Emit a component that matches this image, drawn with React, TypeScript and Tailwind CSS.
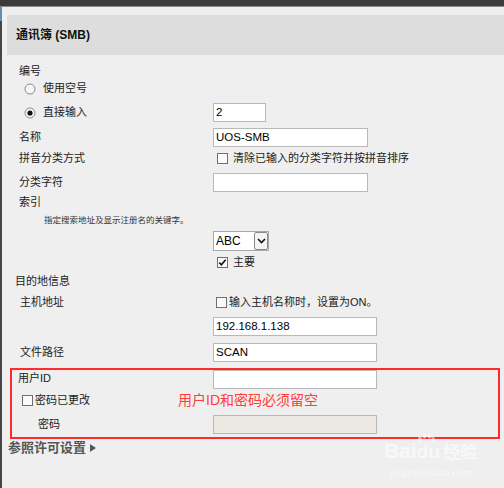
import type { ReactNode } from 'react';

const FONT = { fontFamily: '"Liberation Sans", "Noto Sans CJK SC", sans-serif' };

function Input({ value, width, disabled }: { value?: string; width: string; disabled?: boolean }) {
  return (
    <div
      className={`${width} h-[19px] border border-[#b8b8b8] flex items-center pl-[2px] text-[11.5px] text-black leading-none ${
        disabled ? 'bg-[#ebe9e2]' : 'bg-white'
      }`}
    >
      {value}
    </div>
  );
}

function Radio({ checked }: { checked?: boolean }) {
  return (
    <svg width="12" height="12" viewBox="0 0 12 12" className="shrink-0">
      <circle cx="6" cy="6" r="5" fill="#f7f7f7" stroke="#8a8a8a" strokeWidth="1" />
      {checked && <circle cx="6" cy="6" r="2.6" fill="#111" />}
    </svg>
  );
}

function Checkbox({ checked }: { checked?: boolean }) {
  return (
    <svg width="11" height="11" viewBox="0 0 11 11" className="shrink-0">
      <rect x="0.5" y="0.5" width="10" height="10" fill="#fafafa" stroke="#6f6f6f" />
      {checked && <path d="M2.3 5.6 L4.4 7.8 L8.6 2.8" fill="none" stroke="#111" strokeWidth="1.6" />}
    </svg>
  );
}

function Row({ className, label, children }: { className: string; label?: ReactNode; children?: ReactNode }) {
  return (
    <div className={`grid grid-cols-[211px_1fr] items-center ${className}`}>
      <div className="flex items-center">{label}</div>
      <div className="flex items-center">{children}</div>
    </div>
  );
}

export default function App() {
  return (
    <div className="w-[504px] h-[488px] bg-[#efefef] relative overflow-hidden text-[11px] text-[#222]" style={FONT}>
      <div className="h-[6px] bg-[#3b3b3b]" />
      <div className="h-px bg-[#8a8a8a]" />
      <div className="flex h-[481px]">
        <div className="w-[2px] bg-[#454545] flex flex-col">
          <div className="h-[14px] bg-[#5a8fb8]" />
        </div>
        <div className="flex-1">
          <div className="mt-[8px] ml-[5px] h-[40px] bg-[#dddddd] flex items-center pl-[9px]">
            <span className="text-[12px] font-bold text-[#111]">通讯簿 (SMB)</span>
          </div>

          <Row className="mt-[7px] h-[18px]" label={<span className="pl-[17px]">编号</span>} />
          <Row
            className="h-[17px]"
            label={
              <span className="pl-[22px] flex items-center gap-[7px]">
                <Radio />
                使用空号
              </span>
            }
          />
          <Row
            className="mt-[6px] h-[19px]"
            label={
              <span className="pl-[22px] flex items-center gap-[7px]">
                <Radio checked />
                直接输入
              </span>
            }
          >
            <Input value="2" width="w-[53px]" />
          </Row>
          <Row className="mt-[6px] h-[19px]" label={<span className="pl-[17px]">名称</span>}>
            <Input value="UOS-SMB" width="w-[155px]" />
          </Row>
          <Row className="mt-[2px] h-[18px]" label={<span className="pl-[17px]">拼音分类方式</span>}>
            <span className="pl-[4px] flex items-center gap-[5px]">
              <Checkbox />
              清除已输入的分类字符并按拼音排序
            </span>
          </Row>
          <Row className="mt-[6px] h-[19px]" label={<span className="pl-[17px]">分类字符</span>}>
            <Input width="w-[155px]" />
          </Row>
          <Row className="mt-px h-[18px]" label={<span className="pl-[17px]">索引</span>} />
          <div className="mt-[2px] h-[14px] flex items-center pl-[42px] text-[8.5px] text-[#333]">
            指定搜索地址及显示注册名的关键字。
          </div>
          <Row className="mt-[4px] h-[20px]">
            <div className="w-[56px] h-[20px] border border-[#a8a8a8] bg-white flex items-center">
              <span className="flex-1 pl-[2px] text-[12px] text-black">ABC</span>
              <div className="w-[14px] h-[18px] border border-[#888] rounded-[2px] bg-[#f4f4f4] flex items-center justify-center">
                <svg width="9" height="6" viewBox="0 0 9 6">
                  <path d="M1 1 L4.5 4.5 L8 1" fill="none" stroke="#111" strokeWidth="1.6" />
                </svg>
              </div>
            </div>
          </Row>
          <Row className="mt-[2px] h-[18px]">
            <span className="pl-[4px] flex items-center gap-[5px]">
              <Checkbox checked />
              主要
            </span>
          </Row>
          <Row className="mt-px h-[18px]" label={<span className="pl-[13px]">目的地信息</span>} />
          <Row className="mt-[3px] h-[18px]" label={<span className="pl-[18px]">主机地址</span>}>
            <span className="pl-[3px] flex items-center gap-[2px]">
              <Checkbox />
              输入主机名称时，设置为ON。
            </span>
          </Row>
          <Row className="mt-[6px] h-[19px]">
            <Input value="192.168.1.138" width="w-[164px]" />
          </Row>
          <Row className="mt-[7px] h-[19px]" label={<span className="pl-[18px]">文件路径</span>}>
            <Input value="SCAN" width="w-[164px]" />
          </Row>

          <div className="mt-[6px] ml-[8px] w-[490px] border-2 border-[#ff2a2a] pb-[4px]">
            <div className="grid grid-cols-[201px_1fr] h-[18px] items-start">
              <span className="pl-[6px] leading-[16px]">用户ID</span>
              <Input width="w-[164px]" />
            </div>
            <div className="mt-[2px] h-[20px] grid grid-cols-[166px_1fr] items-center">
              <span className="pl-[10px] flex items-center gap-[2px]">
                <Checkbox />
                密码已更改
              </span>
              <span className="text-[14px] text-[#ff3b3b]">用户ID和密码必须留空</span>
            </div>
            <div className="mt-[5px] grid grid-cols-[201px_1fr] h-[18px] items-center">
              <span className="pl-[26px]">密码</span>
              <Input width="w-[164px]" disabled />
            </div>
          </div>

          <div className="mt-[2px] h-[14px] pl-[6px] flex items-center gap-[4px] text-[13px] font-bold text-[#555]">
            参照许可设置
            <svg width="6" height="8" viewBox="0 0 6 8">
              <path d="M0 0 L6 4 L0 8 Z" fill="#555" />
            </svg>
          </div>
        </div>
      </div>

      <div className="absolute left-[384px] top-[440px] flex flex-col items-center text-white opacity-60 pointer-events-none">
        <div className="flex items-end leading-none">
          <span className="text-[21px] font-bold">Bai</span>
          <div className="relative">
            <svg width="18" height="10" viewBox="0 0 18 10" className="absolute -top-[9px] left-0">
              <ellipse cx="3" cy="6" rx="2" ry="2.6" fill="#fff" />
              <ellipse cx="7.5" cy="3" rx="2" ry="2.6" fill="#fff" />
              <ellipse cx="12.5" cy="3" rx="2" ry="2.6" fill="#fff" />
              <ellipse cx="16" cy="6.5" rx="1.8" ry="2.4" fill="#fff" />
            </svg>
            <span className="text-[19px] font-bold">du</span>
          </div>
          <span className="ml-[3px] text-[17px] font-bold">经验</span>
        </div>
        <span className="mt-[3px] text-[11px]" style={{ fontFamily: '"Liberation Serif", serif' }}>
          jingyan.baidu.com
        </span>
      </div>
    </div>
  );
}
